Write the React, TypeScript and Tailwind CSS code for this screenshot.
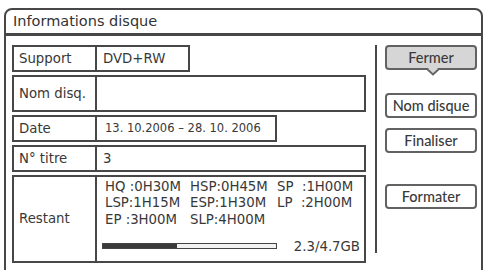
import React from "react";

const LINE = "border-[#474747]";

function Btn({ children, grey, className = "" }: { children: React.ReactNode; grey?: boolean; className?: string }) {
  return (
    <div
      className={`relative h-[25px] w-[92px] rounded-[4px] border-2 border-[#626262] flex items-center justify-center text-[14.5px] text-[#3a3a3a] font-medium ${grey ? "bg-[#d6d6d6]" : "bg-white"} ${className}`}
      style={{ fontFamily: "Lato, 'DejaVu Sans', sans-serif" }}
    >
      {children}
      {grey && (
        <svg className="absolute left-[40px] top-[21px]" width="12" height="8" viewBox="0 0 12 8">
          <path d="M0 1 L6 6.5 L12 1" fill="#d6d6d6" stroke="#626262" strokeWidth="1.8" />
          <rect x="1.5" y="0" width="9" height="1.2" fill="#d6d6d6" />
        </svg>
      )}
    </div>
  );
}

function Row({ label, children, w, h }: { label: string; children?: React.ReactNode; w: string; h: string }) {
  return (
    <div className={`flex border-2 ${LINE} ${w} ${h}`}>
      <div className={`w-[83px] shrink-0 border-r-2 ${LINE} flex items-center pl-[5px]`}>{label}</div>
      <div className="flex-1 flex items-center pl-[6px]">{children}</div>
    </div>
  );
}

export default function App() {
  const cols = [
    ["HQ :0H30M", "HSP:0H45M", "SP\u00a0 :1H00M"],
    ["LSP:1H15M", "ESP:1H30M", "LP\u00a0 :2H00M"],
    ["EP :3H00M", "SLP:4H00M", ""],
  ];
  return (
    <div
      className="w-[485px] h-[270px] bg-white overflow-hidden text-[#383838] text-[13.3px]"
      style={{ fontFamily: "'DejaVu Sans', sans-serif" }}
    >
      <div className={`ml-[4px] mt-[8px] w-[479px] h-[290px] border-2 ${LINE} rounded-t-[8px]`}>
        <div className={`h-[26px] border-b-[3px] ${LINE} pl-[7px] flex items-center text-[14.5px] text-[#333]`}>
          Informations disque
        </div>
        <div className="flex pt-[9px]">
          <div className="ml-[6px] w-[354px] flex flex-col gap-[3px]">
            <Row label="Support" w="w-[178px]" h="h-[27px]">DVD+RW</Row>
            <Row label="Nom disq." w="w-[354px]" h="h-[37px]" />
            <Row label="Date" w="w-[265px]" h="h-[27px]">
              <span className="text-[11.5px] whitespace-pre pl-[2px]">13. 10.2006 – 28. 10. 2006</span>
            </Row>
            <Row label="N° titre" w="w-[354px]" h="h-[27px]">3</Row>
            <div className={`flex border-2 ${LINE} w-[354px] h-[88px]`}>
              <div className={`w-[83px] shrink-0 border-r-2 ${LINE} flex items-center pl-[5px]`}>Restant</div>
              <div className="flex-1 flex flex-col pl-[8px] pr-[4px] pt-[1px]">
                {cols.map((r, i) => (
                  <div key={i} className="flex h-[16.5px] items-center whitespace-pre leading-none">
                    <span className="w-[85px]">{r[0]}</span>
                    <span className="w-[87px]">{r[1]}</span>
                    <span>{r[2]}</span>
                  </div>
                ))}
                <div className="flex items-center mt-[9px]">
                  <div className="w-[175px] h-[6px] border-[1.5px] border-[#444] bg-[#f2f2f2] flex -ml-[3px]">
                    <div className="w-[43%] h-full bg-[#3a3a3a]" />
                  </div>
                  <span className="ml-auto">2.3/4.7GB</span>
                </div>
              </div>
            </div>
          </div>
          <div className="ml-[9px] w-[2px] h-[208px] bg-[#474747]" />
          <div className="ml-[8px] flex flex-col">
            <Btn grey className="h-[24px]">Fermer</Btn>
            <Btn className="mt-[23px]">Nom disque</Btn>
            <Btn className="mt-[10px]">Finaliser</Btn>
            <Btn className="mt-[31px]">Formater</Btn>
          </div>
        </div>
      </div>
    </div>
  );
}
